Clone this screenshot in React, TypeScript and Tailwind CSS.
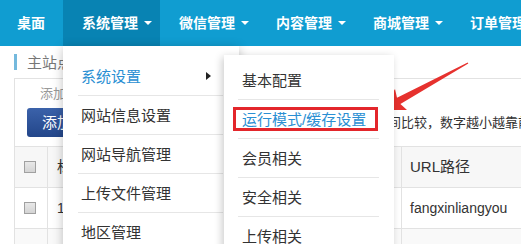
import React from 'react';

const navItems = ['微信管理', '内容管理', '商城管理', '订单管理'];
const menuItems = ['系统设置', '网站信息设置', '网站导航管理', '上传文件管理', '地区管理'];
const subItems = ['基本配置', '运行模式/缓存设置', '会员相关', '安全相关', '上传相关'];

const Caret: React.FC = () => (
  <span className="ml-[6px] inline-block border-x-[4px] border-t-[4px] border-x-transparent border-t-white" />
);

const Checkbox: React.FC = () => (
  <span className="block w-[12px] h-[12px] border border-[#a0a0a0] bg-gradient-to-b from-[#e8e8e8] to-[#d4d4d4]" />
);

const App: React.FC = () => {
  return (
    <div className="relative w-[521px] h-[244px] overflow-hidden bg-white font-['Liberation_Sans','Noto_Sans_CJK_SC',sans-serif] text-[#333]">
      {/* top nav */}
      <div className="flex h-[46px] bg-[#109dd1] text-white text-[14px] font-bold leading-none whitespace-nowrap">
        <div className="flex shrink-0 items-center w-[63px] pl-[17px]">桌面</div>
        <div className="relative flex shrink-0 items-center pl-[19px] pr-[8px] bg-[#0883b3]">
          系统管理
          <Caret />
          {/* dropdown */}
          <div className="absolute left-0 top-full w-[176px] h-[230px] bg-white pt-[11px] font-normal text-[15px] text-[#333] shadow-[0_2px_10px_rgba(0,0,0,0.25)] z-10">
            {menuItems.map((item, i) => (
              <div
                key={item}
                className="flex items-center h-[39px] ml-[15px] mr-[16px] pl-[3px] border-b border-[#e6e6e6]"
              >
                <span className={i === 0 ? 'text-[#2a8fd3]' : ''}>{item}</span>
                {i === 0 && (
                  <span className="ml-auto mr-[12px] border-y-[4px] border-l-[5px] border-y-transparent border-l-[#222]" />
                )}
              </div>
            ))}
            {/* submenu */}
            <div className="absolute left-[161px] top-[9px] w-[170px] h-[230px] bg-white pt-[6px] shadow-[-2px_2px_8px_rgba(0,0,0,0.2)]">
              {subItems.map((item, i) => (
                <div
                  key={item}
                  className="relative flex items-center h-[39px] ml-[14px] mr-[15px] pl-[4px] border-b border-[#e6e6e6]"
                >
                  <span className={i === 1 ? 'text-[#2a8fd3]' : ''}>{item}</span>
                  {i === 1 && (
                    <span className="absolute left-[-5px] right-[1px] top-[7px] h-[24px] border-[3px] border-[#e3262b]" />
                  )}
                </div>
              ))}
            </div>
          </div>
        </div>
        {navItems.map((item) => (
          <div key={item} className="flex shrink-0 items-center pl-[19px] pr-[8px]">
            {item}
            <Caret />
          </div>
        ))}
      </div>

      {/* content */}
      <div className="pl-[14px]">
        <div className="flex items-center h-[32px]">
          <span className="w-[3px] h-[16px] bg-[#74b9dd]" />
          <span className="ml-[10px] text-[15px] text-[#777] leading-none">主站点管理</span>
        </div>

        <div className="border-l border-t border-[#e2e2e2]">
          <div className="pl-[12px] pt-[6px]">
            <div className="pl-[13px] text-[13px] leading-[18px] text-[#999] whitespace-nowrap">添加菜单后请刷新页面</div>
            <div className="flex items-center mt-[5px] whitespace-nowrap">
              <button className="shrink-0 h-[29px] px-[15px] rounded-[3px] bg-gradient-to-b from-[#3b62aa] to-[#23468a] text-white text-[15px] leading-none">
                添加菜单
              </button>
              <span className="ml-[219px] text-[13px]">排序按时间比较，数字越小越靠前</span>
            </div>
          </div>

          <div className="mt-[9px] border-t border-[#e2e2e2] text-[14px]">
            <div className="grid grid-cols-[33px_354px_1fr] h-[41px] bg-[#f7f7f7] border-b border-[#e2e2e2]">
              <div className="flex items-center pl-[9px] border-r border-[#e2e2e2]"><Checkbox /></div>
              <div className="flex items-center pl-[9px] border-r border-[#e2e2e2] text-[15px]">标题</div>
              <div className="flex items-center pl-[8px] text-[15px]">URL路径</div>
            </div>
            <div className="grid grid-cols-[33px_354px_1fr] h-[41px] border-b border-[#e2e2e2]">
              <div className="flex items-center pl-[9px] border-r border-[#e2e2e2]"><Checkbox /></div>
              <div className="flex items-center pl-[9px] border-r border-[#e2e2e2]">10</div>
              <div className="flex items-center pl-[8px]">fangxinliangyou</div>
            </div>
            <div className="grid grid-cols-[33px_354px_1fr] h-[41px] bg-[#f9f9f9]">
              <div className="border-r border-[#e2e2e2]" />
              <div className="border-r border-[#e2e2e2]" />
              <div />
            </div>
          </div>
        </div>
      </div>

      {/* annotation arrow */}
      <svg className="absolute left-[378px] top-[58px]" width="95" height="60" viewBox="0 0 95 60">
        <polygon
          points="4,52 29,52 22.4,46 90.3,5.6 89.7,4.4 19,39.8 17,31"
          fill="#e6312e"
        />
      </svg>
    </div>
  );
};

export default App;
